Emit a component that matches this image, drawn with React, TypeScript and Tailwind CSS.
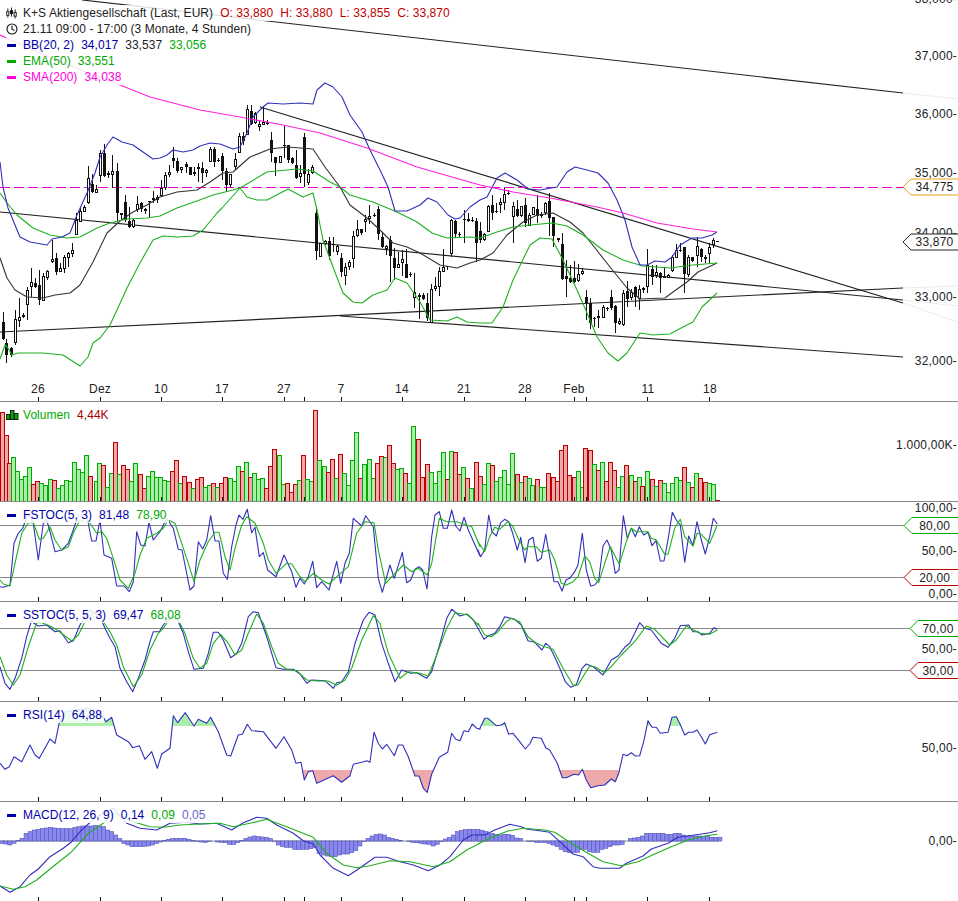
import type { ReactNode } from 'react'

// [x, high, low, bodyTop, bodyBottom, filled] in page pixels
const candles: number[][] = [
  [2.5, 312, 340, 322, 339, 1], [6, 339, 363, 343, 355, 1], [10.5, 347, 357, 348, 355, 1], [14.5, 310, 345, 319, 343, 0],
  [18.5, 298, 327, 317, 321, 0], [22.5, 313, 318, 315, 317, 0], [26.5, 287, 320, 290, 305, 0], [30.5, 268, 297, 282, 287, 0],
  [34.5, 278, 288, 283, 287, 1], [38.5, 270, 305, 285, 300, 1], [42.5, 273, 301, 276, 301, 0], [47, 270, 280, 271, 278, 0],
  [51.5, 240, 263, 259, 262, 0], [55.5, 253, 275, 258, 272, 1], [59.5, 263, 272, 268, 272, 0], [63.5, 255, 273, 257, 269, 0],
  [67.5, 252, 267, 253, 258, 0], [71.5, 243, 257, 250, 254, 0], [75.5, 213, 235, 220, 235, 0], [79.5, 207, 222, 211, 222, 0],
  [83.5, 205, 212, 207, 212, 0], [87.5, 166, 204, 178, 203, 0], [91.5, 174, 193, 184, 192, 1], [96, 185, 193, 189, 193, 0],
  [100, 150, 182, 153, 176, 0], [104, 144, 177, 153, 176, 1], [108, 171, 178, 173, 175, 0], [112, 155, 188, 171, 175, 0],
  [116.5, 163, 221, 171, 213, 1], [120.5, 213, 219, 213, 215, 1], [124.5, 195, 222, 202, 220, 1], [128.5, 207, 228, 221, 227, 1],
  [132.5, 219, 228, 220, 227, 0], [136.5, 196, 212, 204, 210, 0], [141, 202, 212, 203, 209, 1], [145, 208, 214, 209, 211, 1],
  [149, 201, 217, 201, 202, 1], [153, 191, 203, 198, 200, 1], [157, 195, 203, 197, 200, 1], [161, 180, 197, 188, 196, 0],
  [165, 172, 190, 175, 188, 0], [169, 165, 177, 172, 175, 0], [173, 147, 168, 158, 161, 1], [177, 158, 173, 161, 171, 1],
  [181, 167, 173, 167, 170, 0], [186, 162, 173, 164, 167, 1], [190, 167, 175, 167, 175, 1], [194, 167, 176, 172, 174, 1],
  [198, 163, 182, 167, 169, 1], [202, 162, 183, 168, 173, 1], [206, 169, 177, 170, 173, 0], [210, 147, 162, 149, 162, 0],
  [214, 147, 167, 149, 162, 1], [218, 158, 162, 160, 161, 1], [222, 153, 180, 156, 171, 1], [226, 168, 192, 171, 185, 1],
  [230, 174, 187, 174, 185, 0], [235, 153, 170, 159, 167, 0], [239, 133, 153, 136, 153, 0], [243, 132, 145, 136, 141, 1],
  [247, 105, 135, 109, 135, 0], [251, 105, 125, 111, 124, 1], [255, 112, 124, 113, 123, 0], [259, 120, 131, 124, 127, 0],
  [263, 107, 125, 122, 125, 0], [267, 120, 125, 122, 124, 1], [271, 132, 162, 140, 153, 1], [275, 157, 176, 157, 163, 1],
  [280, 156, 163, 156, 163, 0], [284, 126, 158, 145, 146, 1], [288, 145, 163, 145, 160, 1], [292, 157, 164, 158, 163, 1],
  [296, 150, 179, 165, 178, 1], [300, 165, 183, 173, 177, 0], [304, 133, 187, 137, 174, 1], [308, 169, 185, 174, 183, 0],
  [312, 165, 174, 167, 173, 0], [316, 207, 260, 213, 251, 1], [320, 243, 257, 243, 257, 0], [325, 240, 245, 241, 244, 0],
  [329, 237, 260, 241, 256, 1], [333, 237, 252, 244, 245, 1], [337, 245, 255, 246, 252, 0], [341, 253, 277, 258, 272, 1],
  [345, 263, 285, 267, 276, 0], [349, 260, 270, 262, 267, 0], [353, 231, 268, 236, 259, 0], [357, 220, 237, 229, 236, 0],
  [361, 229, 235, 229, 233, 1], [365, 215, 232, 219, 222, 0], [369, 205, 224, 216, 219, 0], [374, 213, 217, 215, 216, 1],
  [378, 206, 240, 209, 234, 1], [382, 232, 248, 237, 247, 1], [386, 245, 255, 246, 249, 0], [390, 236, 282, 240, 256, 1],
  [394, 248, 280, 258, 268, 1], [398, 252, 268, 264, 268, 0], [402, 250, 276, 259, 263, 0], [406, 249, 278, 264, 278, 1],
  [410, 272, 277, 274, 275, 1], [414, 273, 308, 292, 298, 0], [419, 293, 319, 295, 297, 1], [423, 293, 300, 295, 299, 1],
  [427, 293, 321, 303, 318, 1], [431, 284, 323, 289, 323, 0], [435, 277, 291, 286, 289, 0], [439, 267, 296, 271, 287, 0],
  [443, 249, 272, 267, 272, 0], [447, 266, 270, 266, 267, 1], [451, 219, 257, 220, 254, 0], [455, 220, 238, 221, 234, 1],
  [459, 232, 237, 234, 235, 1], [464, 210, 243, 219, 220, 1], [468, 213, 222, 219, 221, 1], [472, 217, 222, 220, 221, 1],
  [476, 218, 262, 221, 243, 1], [480, 222, 243, 231, 240, 1], [484, 233, 241, 234, 240, 0], [488, 205, 232, 206, 232, 0],
  [492, 195, 220, 205, 213, 1], [496, 203, 213, 211, 212, 1], [500, 198, 213, 202, 205, 0], [504, 188, 210, 194, 203, 0],
  [508, 190, 195, 193, 194, 1], [513, 202, 243, 206, 217, 0], [517, 200, 217, 209, 216, 1], [521, 206, 217, 206, 216, 0],
  [525, 198, 227, 205, 223, 1], [529, 213, 226, 215, 226, 0], [533, 207, 215, 207, 215, 0], [537, 195, 223, 209, 216, 1],
  [541, 212, 218, 214, 216, 0], [545, 202, 215, 203, 213, 0], [549, 193, 236, 201, 218, 1], [553, 217, 247, 217, 236, 1],
  [558, 238, 242, 238, 240, 1], [562, 233, 280, 244, 279, 1], [566, 260, 297, 276, 279, 1], [570, 265, 283, 278, 282, 1],
  [574, 261, 283, 278, 282, 1], [578, 264, 282, 274, 281, 0], [582, 268, 275, 271, 274, 0], [586, 290, 320, 297, 303, 1],
  [590, 298, 329, 303, 323, 1], [594, 317, 327, 318, 319, 1], [598, 310, 328, 316, 318, 1], [603, 305, 318, 307, 318, 0],
  [607, 307, 311, 308, 309, 1], [611, 290, 310, 297, 308, 1], [615, 305, 333, 306, 323, 1], [619, 318, 325, 321, 324, 0],
  [623, 290, 326, 293, 325, 0], [627, 281, 307, 291, 299, 1], [631, 289, 300, 292, 298, 0], [635, 286, 307, 287, 297, 1],
  [639, 285, 310, 289, 299, 0], [643, 287, 293, 288, 290, 1], [647, 249, 293, 265, 287, 0], [652, 265, 285, 269, 277, 1],
  [656, 265, 278, 272, 276, 0], [660, 272, 293, 273, 278, 1], [664, 267, 278, 277, 278, 1], [668, 274, 278, 275, 278, 0],
  [672, 255, 272, 257, 271, 0], [676, 244, 258, 250, 258, 0], [680, 243, 252, 250, 251, 1], [684, 247, 293, 247, 274, 1],
  [688, 255, 277, 257, 275, 0], [692, 257, 262, 257, 261, 1], [697, 237, 267, 246, 256, 0], [701, 248, 262, 249, 257, 1],
  [705, 255, 263, 257, 259, 1], [709, 243, 263, 247, 254, 0], [713, 238, 248, 240, 245, 0], [717, 241, 242, 241, 242, 1],
]

const bbUpper = '0,162 3,187 8,208 15,225 20,237 30,242 47,245 52,239 62,237 70,233 77,215 87,193 95,173 100,157 107,145 113,137 122,142 133,145 143,152 153,159 160,158 167,155 173,150 183,152 193,150 200,146 210,143 220,144 233,149 240,147 247,133 253,117 263,107 268,103 283,104 300,103 313,104 317,90 325,83 333,87 342,97 350,115 362,132 370,150 380,170 388,187 395,211 407,211 420,205 428,198 437,202 448,215 455,219 460,218 470,207 480,200 487,197 497,178 505,173 517,180 528,189 540,190 557,187 567,172 575,167 587,170 598,173 608,183 617,200 625,220 632,247 640,265 647,265 655,261 665,262 672,257 680,245 692,238 702,238 712,235 717,232'
const bbMid = '0,258 7,278 15,290 27,297 43,298 55,295 70,293 80,285 93,262 107,233 120,221 133,212 147,205 160,197 177,192 197,190 210,182 223,173 233,172 250,157 270,149 287,147 313,149 325,167 340,187 350,205 367,218 380,230 393,243 407,247 420,253 440,265 457,268 470,263 480,260 493,253 507,235 523,222 537,215 553,213 570,222 583,233 595,248 610,267 627,288 640,299 665,298 673,292 687,282 698,272 717,263'
const bbLower = '0,359 5,345 8,348 12,355 18,353 43,353 63,355 80,366 88,357 93,343 100,338 110,325 117,310 127,288 140,263 153,240 163,236 177,237 193,236 203,230 217,213 222,208 240,188 247,197 257,200 267,200 288,189 303,197 313,193 317,210 323,240 333,267 343,293 353,302 362,303 373,295 387,290 395,278 407,283 420,302 430,320 447,321 457,317 467,322 480,323 492,323 503,307 513,280 530,245 540,238 552,239 563,260 577,290 590,320 597,337 608,353 618,361 627,353 640,333 653,335 670,334 683,327 693,322 702,307 717,293'
const ema50 = '0,193 7,203 17,215 33,228 50,235 67,238 80,237 97,228 110,223 127,219 147,218 160,216 177,208 197,201 213,195 233,190 240,188 267,172 297,169 313,171 330,182 340,187 350,195 373,202 397,212 417,222 432,233 447,238 470,237 480,238 497,232 513,227 530,225 552,223 567,226 583,235 603,250 623,260 643,266 670,268 693,265 717,263'
const sma200 = '0,35 60,62 120,85 150,97 200,110 240,117 283,125 320,133 367,148 417,167 480,185 513,192 550,198 597,207 623,213 657,223 693,229 717,232'

// traced from 3x crops of the panes: [x, y, x, y...] relative to the crop
const fstocL = {
  blue: [0,560,10,562,30,555,42,430,55,400,68,385,75,365,85,340,100,370,115,480,130,370,140,360,150,395,165,455,185,450,205,430,220,390,235,345,260,345,275,423,288,423,300,360,312,465,335,475,350,558,372,558,388,575,400,545,410,395,422,435,435,438,447,368,460,420,480,395,500,355,520,385,535,448,546,450,570,570,582,558,595,425,608,447,620,420,632,347,645,423,657,423,670,520,682,538,695,440,708,375,717,345,729,358,742,328,755,398,765,382,778,470,790,458,803,510,828,530,852,465,875,515,888,562,900,535,913,552,925,530,938,484,950,563,965,545,987,570,1010,484,1022,550,1035,490,1048,460,1060,355,1085,378,1097,347,1120,380,1135,535,1147,577,1170,495,1183,535,1207,457,1220,548,1232,540,1245,508,1257,500,1268,510,1281,567,1295,410,1305,345,1318,335,1330,385,1342,385,1355,330,1367,378,1380,393,1392,352,1405,390,1440,468],
  green: [0,540,10,552,30,558,45,490,65,400,85,368,100,368,118,418,130,415,150,380,165,420,185,450,205,440,220,400,240,360,270,370,290,400,305,395,320,415,340,475,360,540,385,565,405,520,420,465,440,415,470,400,490,385,505,360,525,370,545,430,565,490,582,545,600,480,625,425,645,397,657,397,675,470,690,510,705,445,725,375,740,350,765,370,790,430,805,480,828,520,860,490,875,492,900,530,915,545,940,520,965,540,987,552,1010,530,1045,500,1070,400,1095,365,1122,368,1135,450,1157,550,1185,520,1210,495,1235,515,1255,505,1282,525,1295,490,1318,355,1340,365,1370,365,1415,380,1440,440],
}
const fstocR = {
  blue: [0,450,8,470,20,450,32,345,42,395,55,408,68,368,80,358,92,365,104,400,118,450,128,412,141,488,152,420,165,412,178,484,190,475,203,403,215,470,228,545,240,545,252,573,264,540,275,535,290,515,300,495,313,400,325,510,338,558,350,555,362,540,375,438,387,420,400,450,412,520,423,510,436,347,448,415,460,385,472,410,484,380,497,405,510,397,522,437,534,422,547,483,558,483,570,420,583,337,595,360,607,375,620,487,632,408,645,437,657,365,670,420,682,462,695,410,706,355,718,372],
  green: [0,425,20,455,35,410,50,382,65,388,90,365,105,380,120,415,140,450,150,440,175,440,190,457,215,450,230,480,250,550,265,555,285,545,300,530,320,468,335,485,350,535,362,548,380,490,397,440,424,493,445,425,460,385,475,395,510,395,520,415,535,420,560,463,570,463,590,385,607,358,620,410,645,438,657,400,670,403,695,430,718,375],
}
const sstocL = {
  blue: [0,200,15,250,30,268,45,235,65,175,80,110,95,60,100,68,115,78,140,75,165,95,180,92,205,128,220,122,240,75,255,50,270,30,300,50,315,85,330,115,345,140,360,205,380,245,398,275,415,235,435,180,450,125,460,95,478,95,490,75,510,50,530,55,550,100,565,155,582,208,610,205,625,160,640,97,655,97,670,120,692,173,710,160,725,130,745,50,760,35,775,38,800,110,828,203,850,208,880,208,900,222,920,250,935,240,975,242,1000,265,1010,248,1025,245,1045,215,1065,130,1090,60,1107,37,1125,45,1145,130,1165,190,1185,245,1205,210,1232,220,1250,218,1280,235,1295,215,1320,130,1340,55,1355,28,1380,48,1400,42,1420,60,1440,95],
  green: [0,170,20,225,40,255,60,225,85,140,110,68,125,68,150,78,175,92,195,108,215,123,235,105,260,55,285,35,310,65,330,95,350,135,370,200,400,260,425,225,450,150,475,100,490,85,510,55,535,60,555,100,580,175,600,205,620,190,640,130,662,103,685,130,705,165,725,150,745,100,770,42,790,70,815,140,835,190,860,208,890,212,920,240,950,243,985,243,1010,256,1035,240,1055,205,1085,120,1120,47,1140,70,1165,160,1200,235,1225,215,1260,220,1285,228,1310,165,1340,85,1365,38,1405,45,1425,65,1440,80],
}
const sstocR = {
  blue: [0,85,18,118,30,108,50,100,65,80,80,50,110,58,130,75,150,122,170,127,192,150,203,130,215,140,232,175,250,215,262,245,278,262,295,255,312,205,325,192,345,200,375,225,400,180,420,168,440,142,455,130,470,100,485,68,500,85,520,90,550,130,570,142,590,115,607,77,632,75,645,95,660,95,672,105,695,100,708,83,718,88],
  green: [0,70,20,105,40,110,60,95,85,65,100,55,125,65,150,110,175,130,200,140,225,148,255,205,285,255,300,255,335,197,350,200,380,218,400,200,430,165,470,125,505,78,530,88,575,135,595,120,625,78,665,100,695,103,718,90],
}
const rsiL = [0,490,15,508,28,500,42,470,65,485,90,435,105,465,118,475,150,417,165,430,178,367,195,335,260,325,300,335,318,365,335,352,350,405,385,425,398,443,418,437,435,478,455,455,472,505,485,462,510,445,520,347,533,368,556,338,582,378,595,358,620,370,632,352,655,395,680,465,692,468,715,405,727,403,742,373,755,392,790,395,828,445,852,410,875,450,888,490,903,487,913,540,925,515,938,512,950,550,1000,527,1025,547,1050,527,1060,493,1085,487,1100,482,1110,487,1122,397,1135,430,1147,447,1160,433,1183,467,1195,435,1208,435,1225,470,1245,528,1257,528,1270,565,1282,577,1295,522,1318,472,1343,457,1355,400,1367,418,1380,422,1392,392,1405,395,1417,372,1430,385,1440,388]
const rsiR = [6,385,20,355,30,355,55,377,70,375,80,368,92,403,105,400,125,425,142,447,155,432,165,412,190,415,203,443,215,450,238,490,253,533,265,533,288,523,302,525,313,508,325,540,338,563,360,557,380,555,400,537,412,545,422,520,435,463,447,467,460,458,472,468,485,467,497,425,510,362,522,382,535,382,547,400,570,397,582,352,595,350,605,370,620,405,632,397,645,397,657,390,670,410,682,432,695,404,718,397]
const macdL = {
  blue: [0,858,30,877,60,860,90,825,115,807,150,770,190,745,215,725,240,695,265,672,290,650,340,625,380,670,420,685,470,690,510,670,560,667,600,672,650,670,695,690,730,668,770,652,800,655,830,675,880,700,910,722,940,732,960,765,1000,805,1045,827,1085,800,1125,772,1160,772,1200,785,1240,795,1285,812,1320,795,1350,770,1390,720,1415,705,1440,705],
  green: [0,858,40,868,75,860,110,840,165,795,215,755,265,700,310,670,340,640,400,665,450,680,490,682,540,675,600,672,660,670,700,680,750,670,800,658,860,680,940,712,980,760,1030,795,1070,803,1110,797,1170,782,1230,785,1300,800,1350,785,1400,750,1440,730],
}
const macdR = {
  blue: [0,705,20,705,50,690,95,673,130,680,145,687,190,693,215,697,245,725,285,762,315,770,345,800,365,805,425,805,445,790,495,768,520,747,570,730,600,712,650,705,695,698,718,692],
  green: [0,732,40,712,90,693,135,685,200,690,230,697,280,730,330,760,375,785,430,797,480,785,530,762,580,740,630,720,680,708,718,703],
}
const histL = [730,732,735,730,722,715,700,695,690,688,686,684,682,684,685,686,686,686,682,680,678,678,678,676,678,680,690,695,705,716,730,735,740,740,740,739,738,735,730,726,722,718,716,715,715,715,718,722,724,726,727,725,723,726,727,728,733,733,728,722,716,711,708,710,711,712,716,724,735,740,742,742,748,748,748,748,746,742,760,765,768,770,770,765,762,762,758,752,738,724,715,708,703,702,705,712,715,718,721,723,724,727,728,730,732,733,738,733,725,717,712,705,695,691,689,688,688,688,691,695]
const histR = [703,703,703,700,703,705,703,703,706,714,715,723,724,724,727,727,727,730,735,740,748,755,757,757,757,748,748,755,757,757,748,745,740,735,735,733,723,716,714,712,708,700,700,700,700,700,703,703,700,700,705,708,708,708,708,710,710,712,712,712]

// volume: crop x, crop y of the bar top, negative y = red day
const volL = [[5,-37],[17,-105],[28,-190],[40,170],[52,214],[64,238],[76,228],[88,200],[100,-253],[112,-244],[124,250],[136,256],[150,236],[163,-241],[175,265],[187,256],[199,241],[211,244],[223,187],[235,208],[247,217],[259,166],[271,-229],[287,244],[298,190],[310,-196],[322,262],[334,220],[346,-127],[358,223],[370,-196],[382,-208],[394,244],[406,190],[420,-223],[433,-265],[445,229],[457,214],[469,232],[481,232],[493,241],[505,244],[517,-214],[529,-181],[541,250],[553,-229],[568,-247],[580,265],[592,-238],[604,-232],[616,262],[628,256],[640,-250],[652,262],[664,-250],[676,-232],[690,235],[703,244],[715,199],[727,-214],[739,187],[751,-232],[763,220],[775,238],[787,235],[799,-265],[811,-199],[823,-148],[837,166],[849,253],[862,-250],[874,-277],[886,-253],[898,241],[910,-166],[922,238],[934,244],[946,-31],[958,181],[972,199],[984,-217],[996,-178],[1008,235],[1021,-163],[1033,220],[1045,256],[1057,181],[1069,97],[1081,-235],[1093,193],[1106,178],[1120,235],[1132,-190],[1144,-169],[1156,172],[1168,-136],[1180,-190],[1192,208],[1204,205],[1216,-220],[1228,250],[1240,79],[1254,-118],[1266,-232],[1280,-193],[1292,217],[1304,250],[1316,214],[1328,157],[1340,-238],[1352,154],[1364,-157],[1376,-223],[1388,202],[1402,-235],[1414,265],[1428,-187]]
const volR = [[5,-229],[17,253],[29,190],[41,-196],[53,244],[65,232],[77,211],[90,253],[103,160],[116,-223],[128,247],[140,-229],[152,235],[163,256],[176,-238],[188,262],[199,262],[211,-220],[224,-232],[237,-244],[250,-151],[262,-136],[274,-226],[287,-232],[299,214],[311,262],[322,-145],[335,-151],[347,193],[359,-211],[372,187],[384,-244],[397,-187],[409,-211],[421,262],[433,229],[445,-196],[458,226],[470,-244],[482,232],[493,-259],[506,214],[521,-238],[533,259],[545,-241],[557,250],[569,277],[581,250],[593,232],[605,241],[617,-202],[629,247],[641,-262],[654,220],[667,-235],[680,-247],[692,250],[704,253],[716,-300]]

const ticks = [38, 100, 161, 222, 284, 304, 341, 402, 464, 525, 574, 586, 647, 709]
const dates: [number, string][] = [[38, '26'], [100, 'Dez'], [161, '10'], [222, '17'], [284, '27'], [341, '7'], [402, '14'], [464, '21'], [525, '28'], [574, 'Feb'], [648, '11'], [710, '18']]

const BLUE = '#3030bb'
const GREEN = '#1fb01f'

const crop = (list: number[], dx: number, dy: number) => {
  const out: string[] = []
  for (let i = 0; i < list.length; i += 2) out.push(`${(list[i] / 3 + dx).toFixed(1)},${(list[i + 1] / 3 + dy).toFixed(1)}`)
  return out.join(' ')
}

function Line({ points, color, width = 1.1 }: { points: string; color: string; width?: number }) {
  return <polyline points={points} fill="none" stroke={color} strokeWidth={width} strokeLinejoin="round" />
}

function Label({ y, children }: { y: number; children: string }) {
  return <text x={957} y={y + 4} textAnchor="end" fill="#222">{children}</text>
}

function Flag({ y, tip, color, label, cx }: { y: number; tip: number; color: string; label: string; cx: number }) {
  return (
    <g>
      <path d={`M959 ${y - 8} H${tip + 8} L${tip} ${y} L${tip + 8} ${y + 8} H959`} fill="#fff" stroke={color} strokeWidth={1} />
      <text x={cx} y={y + 4} textAnchor="middle" fill="#222">{label}</text>
    </g>
  )
}

function Ticks({ bottom }: { bottom: number }) {
  return <>{ticks.map(x => <line key={x} x1={x + 0.5} x2={x + 0.5} y1={bottom - 4} y2={bottom} stroke="#111" shapeRendering="crispEdges" />)}</>
}

function Pane({ top, height, last, legend, children }: { top: number; height: number; last?: boolean; legend: ReactNode; children: ReactNode }) {
  const inner = last ? height : height - 1
  return (
    <div className={`relative shrink-0 ${last ? '' : 'border-b border-[#888]'}`} style={{ height }}>
      <svg className="block tracking-[0.22px]" width={958} height={inner} viewBox={`0 ${top} 958 ${inner}`}>{children}</svg>
      <div className="absolute left-[6px] top-[5px] flex flex-col tracking-[0.05px]">{legend}</div>
    </div>
  )
}

function Row({ icon, children }: { icon: ReactNode; children: ReactNode }) {
  return (
    <div className="flex h-4 w-fit items-center gap-[7px] bg-white/85 pr-[2px]">
      <span className="mr-[-1px] flex w-[11px] items-center justify-center">{icon}</span>
      {children}
    </div>
  )
}

const Dash = ({ color }: { color: string }) => <span className="block h-[3px] w-[9px]" style={{ background: color }} />

function CandleIcon() {
  return (
    <svg width="12" height="12" viewBox="0 0 12 12" fill="none" stroke="#111">
      <path d="M2 1v10M6 0v10M10 2v10" />
      <rect x="0.8" y="4.5" width="2.4" height="4" fill="#fff" />
      <rect x="4.8" y="3.5" width="2.4" height="3" fill="#111" />
      <rect x="8.8" y="5.5" width="2.4" height="4" fill="#fff" />
    </svg>
  )
}

function ClockIcon() {
  return (
    <svg className="shrink-0" width="12" height="12" viewBox="0 0 12 12" fill="none" stroke="#111" strokeWidth="1.1">
      <circle cx="6" cy="6" r="5" />
      <path d="M6 2.8V6l2.4 1.6" />
    </svg>
  )
}

function VolumeIcon() {
  return (
    <svg className="ml-[2px] shrink-0" width="13" height="10" viewBox="0 0 13 10" fill="#00aa00" stroke="#111" strokeWidth="0.9">
      <rect x="0.5" y="4.5" width="3.5" height="5" />
      <rect x="4.5" y="0.5" width="3.5" height="9" />
      <rect x="8.5" y="3.5" width="3.5" height="6" />
    </svg>
  )
}

function IndicatorLines({ left, right, dyL, dyR }: { left: { blue: number[]; green: number[] }; right: { blue: number[]; green: number[] }; dyL: number; dyR: number }) {
  return (
    <>
      <Line points={crop(left.blue, 0, dyL) + ' ' + crop(right.blue, 478, dyR)} color={BLUE} />
      <Line points={crop(left.green, 0, dyL) + ' ' + crop(right.green, 478, dyR)} color={GREEN} />
    </>
  )
}

export default function App() {
  const rsiPoints = crop(rsiL, 0, 600) + ' ' + crop(rsiR, 478, 600)
  const bars = [...volL.map(([x, y]) => [x / 3, y]), ...volR.map(([x, y]) => [x / 3 + 478, y])]
  const hist = [...histL.map((y, i) => [1.7 + i * 4.07, y]), ...histR.map((y, i) => [479.7 + i * 4.07, y])]

  return (
    <div className="flex h-[901px] w-[958px] flex-col overflow-hidden bg-white font-['Liberation_Sans',Arial,sans-serif] text-[12px] leading-none text-[#222]">
      <Pane
        top={0}
        height={402}
        legend={
          <div className="flex flex-col">
            <Row icon={<CandleIcon />}>
              <span className="text-[#222]">K+S Aktiengesellschaft (Last, EUR)</span>
              <span className="text-[#c00000]">O: 33,880</span>
              <span className="text-[#c00000]">H: 33,880</span>
              <span className="text-[#c00000]">L: 33,855</span>
              <span className="text-[#c00000]">C: 33,870</span>
            </Row>
            <Row icon={<ClockIcon />}>
              <span>21.11 09:00 - 17:00 (3 Monate, 4 Stunden)</span>
            </Row>
            <Row icon={<Dash color="#0000aa" />}>
              <span className="text-[#0000aa]">BB(20, 2)</span>
              <span className="text-[#0000aa]">34,017</span>
              <span>33,537</span>
              <span className="text-[#00aa00]">33,056</span>
            </Row>
            <Row icon={<Dash color="#00aa00" />}>
              <span className="text-[#00aa00]">EMA(50)</span>
              <span className="text-[#00aa00]">33,551</span>
            </Row>
            <Row icon={<Dash color="#ff00dd" />}>
              <span className="text-[#ff00dd]">SMA(200)</span>
              <span className="text-[#ff00dd]">34,038</span>
            </Row>
          </div>
        }
      >
        {/* trend lines, fading out past the plot edge */}
        <g stroke="#ececec" strokeWidth={1}>
          <line x1={903} y1={93} x2={958} y2={99} />
          <line x1={903} y1={303} x2={958} y2={322} />
          <line x1={903} y1={300} x2={958} y2={306} />
          <line x1={903} y1={288} x2={958} y2={286} />
        </g>
        <g stroke="#222" strokeWidth={1.2}>
          <line x1={82} y1={0} x2={903} y2={93} />
          <line x1={260} y1={107} x2={903} y2={303} />
          <line x1={0} y1={212} x2={903} y2={300} />
          <line x1={0} y1={332} x2={903} y2={288} />
          <line x1={340} y1={316} x2={903} y2={357} />
        </g>
        <line x1={0} x2={903} y1={187.5} y2={187.5} stroke="#ee00cc" strokeDasharray="10 4" shapeRendering="crispEdges" />
        {candles.map(([x, hi, lo, top, bot, filled]) => {
          const c = Math.round(x) + 0.5
          return (
            <g key={x} shapeRendering="crispEdges">
              <line x1={c} x2={c} y1={hi} y2={lo} stroke="#111" />
              {filled
                ? <rect x={c - 1.5} y={top} width={3} height={bot - top} fill="#111" />
                : <rect x={c - 1} y={top + 0.5} width={2} height={Math.max(bot - top - 1, 1)} fill="#fff" stroke="#111" />}
            </g>
          )
        })}
        <Line points={bbMid} color="#333" />
        <Line points={ema50} color={GREEN} />
        <Line points={bbLower} color={GREEN} />
        <Line points={bbUpper} color={BLUE} />
        <Line points={sma200} color="#ff22dd" width={1.15} />
        {dates.map(([x, t]) => <text key={t} x={x} y={393} textAnchor="middle" fill="#222">{t}</text>)}
        <Ticks bottom={401} />
        <Label y={-1}>38,000-</Label>
        <Label y={56}>37,000-</Label>
        <Label y={114}>36,000-</Label>
        <Label y={173}>35,000-</Label>
        <Label y={233}>34,000-</Label>
        <Label y={297}>33,000-</Label>
        <Label y={361}>32,000-</Label>
        <Flag y={187} tip={903} color="#e6a520" label="34,775" cx={934.5} />
        <Flag y={242} tip={903} color="#222" label="33,870" cx={934.5} />
      </Pane>

      <Pane
        top={402}
        height={100}
        legend={
          <Row icon={<VolumeIcon />}>
            <span className="text-[#00aa00]">Volumen</span>
            <span className="text-[#aa0000]">4,44K</span>
          </Row>
        }
      >
        {bars.map(([x, y]) => {
          const left = Math.round(x - 2) + 0.5
          const top = Math.round(Math.abs(y) / 3 + 400)
          return (
            <rect
              key={x}
              x={left}
              y={top + 0.5}
              width={4}
              height={Math.max(501 - top, 0)}
              fill={y < 0 ? '#eeaaaa' : '#aaeeaa'}
              stroke={y < 0 ? '#bb0000' : '#00aa00'}
              shapeRendering="crispEdges"
            />
          )
        })}
        <Ticks bottom={501} />
        <Label y={445}>1.000,00K-</Label>
      </Pane>

      <Pane
        top={502}
        height={100}
        legend={
          <Row icon={<Dash color="#0000aa" />}>
            <span className="text-[#0000aa]">FSTOC(5, 3)</span>
            <span className="text-[#0000aa]">81,48</span>
            <span className="text-[#00aa00]">78,90</span>
          </Row>
        }
      >
        <g stroke="#888" shapeRendering="crispEdges">
          <line x1={0} x2={904} y1={525.5} y2={525.5} />
          <line x1={0} x2={904} y1={577.5} y2={577.5} />
        </g>
        <IndicatorLines left={fstocL} right={fstocR} dyL={400} dyR={400} />
        <Ticks bottom={601} />
        <Label y={508}>100,00-</Label>
        <Label y={551}>50,00-</Label>
        <Label y={594}>0,00-</Label>
        <Flag y={525.5} tip={904} color="#00aa00" label="80,00" cx={934.7} />
        <Flag y={577.5} tip={904} color="#bb0000" label="20,00" cx={934.7} />
      </Pane>

      <Pane
        top={602}
        height={100}
        legend={
          <Row icon={<Dash color="#0000aa" />}>
            <span className="text-[#0000aa]">SSTOC(5, 5, 3)</span>
            <span className="text-[#0000aa]">69,47</span>
            <span className="text-[#00aa00]">68,08</span>
          </Row>
        }
      >
        <g stroke="#888" shapeRendering="crispEdges">
          <line x1={0} x2={910} y1={628.5} y2={628.5} />
          <line x1={0} x2={910} y1={670.5} y2={670.5} />
        </g>
        <IndicatorLines left={sstocL} right={sstocR} dyL={600} dyR={600} />
        <Ticks bottom={701} />
        <Label y={649}>50,00-</Label>
        <Flag y={628.5} tip={910} color="#00aa00" label="70,00" cx={938} />
        <Flag y={670.5} tip={910} color="#bb0000" label="30,00" cx={938} />
      </Pane>

      <Pane
        top={702}
        height={100}
        legend={
          <Row icon={<Dash color="#0000aa" />}>
            <span className="text-[#0000aa]">RSI(14)</span>
            <span className="text-[#0000aa]">64,88</span>
          </Row>
        }
      >
        <clipPath id="rsi-over"><rect x={0} y={700} width={958} height={26} /></clipPath>
        <clipPath id="rsi-under"><rect x={0} y={770} width={958} height={32} /></clipPath>
        <polygon points={`${rsiPoints} 718,726 0,726`} fill="#aaeeaa" clipPath="url(#rsi-over)" />
        <polygon points={`${rsiPoints} 718,770 0,770`} fill="#eeaaaa" clipPath="url(#rsi-under)" />
        <Line points={rsiPoints} color={BLUE} />
        <Ticks bottom={801} />
        <Label y={748}>50,00-</Label>
      </Pane>

      <Pane
        top={802}
        height={99}
        last
        legend={
          <Row icon={<Dash color="#0000aa" />}>
            <span className="text-[#0000aa]">MACD(12, 26, 9)</span>
            <span className="text-[#0000aa]">0,14</span>
            <span className="text-[#00aa00]">0,09</span>
            <span className="text-[#6666cc]">0,05</span>
          </Row>
        }
      >
        <line x1={0} x2={719} y1={841} y2={841} stroke="#888" />
        {hist.map(([x, y]) => {
          const top = Math.min(y / 3 + 600, 841)
          const h = Math.abs(y / 3 + 600 - 841)
          return <rect key={x} x={x - 2} y={top} width={4.07} height={h} fill="#8888ee" stroke="#5555bb" strokeWidth={0.6} />
        })}
        <IndicatorLines left={macdL} right={macdR} dyL={600} dyR={600} />
        <Ticks bottom={901} />
        <Label y={841}>0,00-</Label>
      </Pane>
    </div>
  )
}
